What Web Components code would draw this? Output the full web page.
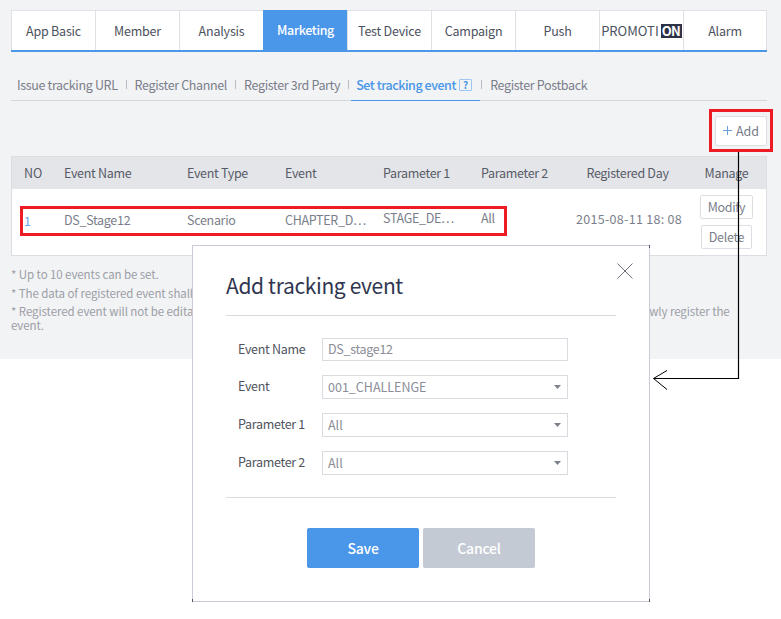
<!DOCTYPE html>
<html lang="en">
<head>
<meta charset="utf-8">
<title>Set tracking event</title>
<style>
    html, body { margin: 0; background: #fff; }
    body { width: 781px; height: 619px; position: relative; overflow: hidden;
           font: 12px/16px "Noto Sans CJK KR", "Noto Sans", sans-serif; color: #6f7480; }
</style>
</head>
<body>
<app-page>
    <tab-bar slot="top">
        <tab-item>App Basic</tab-item>
        <tab-item>Member</tab-item>
        <tab-item>Analysis</tab-item>
        <tab-item active>Marketing</tab-item>
        <tab-item>Test Device</tab-item>
        <tab-item>Campaign</tab-item>
        <tab-item>Push</tab-item>
        <tab-item style="font-size:13px;letter-spacing:0">PROMOTI<on-badge>ON</on-badge></tab-item>
        <tab-item>Alarm</tab-item>
    </tab-bar>
    <sub-nav slot="top"></sub-nav>
    <add-button slot="top"></add-button>
    <event-table slot="top"></event-table>
    <note-list slot="top"></note-list>
</app-page>
<add-modal></add-modal>
<call-outs></call-outs>

<script>
// 页面外框
class AppPage extends HTMLElement {
    constructor() {
        super();
        this.attachShadow({ mode: 'open' }).innerHTML = `
            <style>
                :host { display: block; }
                .panel {
                    background: #f2f3f5;
                    height: 349px;
                    padding: 10px 14px 0 11px;
                    display: flex;
                    flex-direction: column;
                }
            </style>
            <div class="panel"><slot name="top"></slot></div>
        `;
    }
}

class TabBar extends HTMLElement {
    constructor() {
        super();
        this.attachShadow({ mode: 'open' }).innerHTML = `
            <style>
                :host {
                    display: grid;
                    grid-template-columns: repeat(9, 84px);
                    height: 42px;
                    box-sizing: border-box;
                    background: #fff;
                    border-bottom: 2px solid #4a96e8;
                }
            </style>
            <slot></slot>
        `;
    }
}

class TabItem extends HTMLElement {
    constructor() {
        super();
        this.attachShadow({ mode: 'open' }).innerHTML = `
            <style>
                :host {
                    display: flex;
                    align-items: center;
                    justify-content: center;
                    box-sizing: border-box;
                    border: 1px solid #dfe1e6;
                    border-width: 1px 0 0 1px;
                    font-size: 12.5px;
                    letter-spacing: -0.2px;
                    color: #4c515e;
                    white-space: nowrap;
                }
                :host(:last-child) { border-right-width: 1px; }
                :host([active]) {
                    background: #4a96e8;
                    border-color: #4a96e8;
                    color: #fff;
                    font-weight: 500;
                    letter-spacing: -0.35px;
                    padding-bottom: 2px;
                }
            </style>
            <slot></slot>
        `;
    }
}

class OnBadge extends HTMLElement {
    constructor() {
        super();
        this.attachShadow({ mode: 'open' }).innerHTML = `
            <style>
                :host {
                    display: inline-block;
                    margin-left: 2px;
                    padding: 0 2px 0 1px;
                    background: #2c3347;
                    color: #fff;
                    font-weight: 700;
                    letter-spacing: -0.8px;
                    line-height: 14px;
                }
            </style>
            <slot></slot>
        `;
    }
}

class SubNav extends HTMLElement {
    constructor() {
        super();
        this.attachShadow({ mode: 'open' }).innerHTML = `
            <style>
                :host {
                    display: flex;
                    align-items: center;
                    height: 31px;
                    margin-top: 17px;
                    padding-left: 6px;
                    border-bottom: 1px solid #d3d6dc;
                    font-size: 12.5px;
                    letter-spacing: -0.35px;
                    color: #7a7e8a;
                    white-space: nowrap;
                }
                .sep { width: 1px; height: 9px; background: #b9bcc4; margin: 0 8px; }
                .on {
                    align-self: stretch;
                    display: flex;
                    align-items: center;
                    margin: 0 0 -1px 2px;
                    padding: 0 0 0 5px;
                    width: 129px;
                    box-sizing: border-box;
                    border-bottom: 1px solid #4a96e8;
                    color: #4a96e8;
                    font-weight: 500;
                    letter-spacing: -0.45px;
                }
                .help {
                    box-sizing: border-box;
                    width: 13px; height: 12px;
                    margin-left: 3px;
                    border: 1px solid #9ec6f2;
                    border-radius: 1px;
                    font-size: 10px;
                    line-height: 10px;
                    text-align: center;
                    font-weight: 700;
                    letter-spacing: 0;
                }
            </style>
            <span>Issue tracking URL</span><i class="sep"></i>
            <span>Register Channel</span><i class="sep"></i>
            <span>Register 3rd Party</span><i class="sep" style="margin-right:0"></i>
            <span class="on"><span>Set tracking event</span><span class="help">?</span></span><i class="sep" style="margin-left:1px"></i>
            <span>Register Postback</span>
        `;
    }
}

class AddButton extends HTMLElement {
    constructor() {
        super();
        this.attachShadow({ mode: 'open' }).innerHTML = `
            <style>
                :host {
                    display: flex;
                    align-items: center;
                    gap: 4px;
                    align-self: flex-end;
                    box-sizing: border-box;
                    width: 52px;
                    height: 30px;
                    margin-top: 15px;
                    padding: 0 0 1px 7px;
                    background: #fff;
                    border: 1px solid #dcdee3;
                    border-radius: 2px;
                    font-size: 12.5px;
                    color: #777b87;
                }
                svg { display: block; }
            </style>
            <svg width="9" height="9" viewBox="0 0 9 9"><path d="M4.5 0v9M0 4.5h9" stroke="#6a9fe0" fill="none"/></svg>
            <span>Add</span>
        `;
    }
}

class EventTable extends HTMLElement {
    constructor() {
        super();
        this.attachShadow({ mode: 'open' }).innerHTML = `
            <style>
                :host {
                    display: block;
                    box-sizing: border-box;
                    height: 100px;
                    margin-top: 10px;
                    background: #fff;
                    border: 1px solid #dcdee3;
                    font-size: 12.5px;
                    letter-spacing: -0.3px;
                    color: #7a7e8a;
                }
                .row {
                    display: grid;
                    grid-template-columns: 52px 123px 98px 98px 98px 90px 116px 1fr;
                    align-items: center;
                }
                .head { height: 32px; box-sizing: border-box; background: #e4e5e9; color: #575b67; }
                .body { height: 66px; padding-bottom: 4px; box-sizing: border-box; }
                .no { padding-left: 12px; letter-spacing: 0; }
                .num { padding-left: 12px; color: #6aa5ea; padding-top: 2px; }
                .c { text-align: center; }
                .rd { text-align: center; padding-right: 3px; }
                .up { padding-bottom: 4px; }
                .date { text-align: center; letter-spacing: 0.3px; padding-bottom: 2px; }
                .manage { display: flex; flex-direction: column; align-items: center; gap: 6px; align-self: start; margin-top: 6px; }
                .btn {
                    box-sizing: border-box;
                    height: 24px;
                    padding: 0 7px;
                    line-height: 22px;
                    border: 1px solid #dcdee3;
                    border-radius: 2px;
                    background: #fff;
                }
            </style>
            <div class="row head">
                <span class="no">NO</span><span>Event Name</span><span>Event Type</span><span>Event</span>
                <span>Parameter 1</span><span>Parameter 2</span><span class="rd">Registered Day</span><span class="c">Manage</span>
            </div>
            <div class="row body">
                <span class="num">1</span><span>DS_Stage12</span><span>Scenario</span><span>CHAPTER_D⋯</span>
                <span class="up">STAGE_DE⋯</span><span class="up">All</span><span class="date">2015-08-11 18: 08</span>
                <div class="manage"><span class="btn">Modify</span><span class="btn">Delete</span></div>
            </div>
        `;
    }
}

class NoteList extends HTMLElement {
    constructor() {
        super();
        this.attachShadow({ mode: 'open' }).innerHTML = `
            <style>
                :host {
                    display: block;
                    margin-top: 11px;
                    font-size: 11.5px;
                    line-height: 14px;
                    letter-spacing: -0.08px;
                    color: #9b9ea6;
                }
                p { margin: 0 0 4px; }
                p:nth-child(2) { margin-bottom: 5px; }
            </style>
            <p>* Up to 10 events can be set.</p>
            <p>* The data of registered event shall</p>
            <p>* Registered event will not be editable once it's been registered. To change the content, please delete the old event and newly register the<br>event.</p>
        `;
    }
}

class FormRow extends HTMLElement {
    constructor() {
        super();
        const caret = this.hasAttribute('select')
            ? '<svg width="7" height="4" viewBox="0 0 7 4"><path d="M0 0h7L3.500 4z" fill="#7d818c"/></svg>' : '';
        this.attachShadow({ mode: 'open' }).innerHTML = `
            <style>
                :host {
                    display: grid;
                    grid-template-columns: 84px 246px;
                    align-items: center;
                    height: 24px;
                    font-size: 12.5px;
                    color: #4f5460;
                }
                :host(:not([select])) { height: 23px; }
                :host(:not([select])) .field { padding-bottom: 1px; letter-spacing: -0.3px; }
                .label { letter-spacing: -0.3px; padding-bottom: 2px; }
                .field {
                    display: flex;
                    align-items: center;
                    justify-content: space-between;
                    box-sizing: border-box;
                    height: 100%;
                    padding: 0 6px 0 5px;
                    border: 1px solid #d9dbe0;
                    color: #8a8d97;
                }
            </style>
            <span class="label">${this.getAttribute('label')}</span>
            <div class="field"><span>${this.getAttribute('value')}</span>${caret}</div>
        `;
    }
}

class AddModal extends HTMLElement {
    constructor() {
        super();
        this.attachShadow({ mode: 'open' }).innerHTML = `
            <style>
                :host {
                    position: absolute;
                    left: 192px;
                    top: 245px;
                    width: 458px;
                    height: 357px;
                    box-sizing: border-box;
                    padding: 0 33px;
                    background: #fff;
                    border: 1px solid #c9cbd6;
                    display: flex;
                    flex-direction: column;
                }
                h2 {
                    margin: 0;
                    height: 70px;
                    box-sizing: border-box;
                    padding-top: 23px;
                    border-bottom: 1px solid #d8dade;
                    font-size: 21px;
                    line-height: 32px;
                    letter-spacing: -0.35px;
                    font-weight: 400;
                    color: #2f3650;
                }
                .close { position: absolute; right: 16px; top: 17px; display: block; }
                .dot { position: absolute; width: 1px; height: 3px; background: #55586a; }
                .form {
                    display: flex;
                    flex-direction: column;
                    gap: 14px;
                    padding: 22px 0 22px 12px;
                    border-bottom: 1px solid #d8dade;
                }
                .actions { display: flex; justify-content: center; gap: 4px; margin-top: 30px; }
                .actions span {
                    width: 112px;
                    height: 40px;
                    line-height: 40px;
                    text-align: center;
                    border-radius: 2px;
                    color: #fff;
                    font-size: 14px;
                    letter-spacing: -0.2px;
                    font-weight: 500;
                }
                .save { background: #4a96e8; }
                .cancel { background: #c3cad4; }
            </style>
            <h2>Add tracking event</h2>
            <svg class="close" width="16" height="16" viewBox="0 0 16 16"><path d="M.5.5l15 15M15.500.5l-15 15" stroke="#6d717c" fill="none"/></svg>
            <div class="form">
                <form-row label="Event Name" value="DS_stage12"></form-row>
                <form-row select label="Event" value="001_CHALLENGE"></form-row>
                <form-row select label="Parameter 1" value="All"></form-row>
                <form-row select label="Parameter 2" value="All"></form-row>
            </div>
            <div class="actions"><span class="save">Save</span><span class="cancel">Cancel</span></div>
            <i class="dot" style="right:-1px;top:-1px"></i>
            <i class="dot" style="left:-1px;bottom:-1px"></i>
            <i class="dot" style="right:-1px;bottom:-1px"></i>
        `;
    }
}

// 红框和箭头标注，盖在页面上面
class CallOuts extends HTMLElement {
    constructor() {
        super();
        this.attachShadow({ mode: 'open' }).innerHTML = `
            <style>
                :host { position: absolute; left: 0; top: 0; width: 781px; height: 619px; pointer-events: none; }
                svg { display: block; }
            </style>
            <svg width="781" height="619" viewBox="0 0 781 619" fill="none">
                <rect x="710.500" y="110.500" width="61" height="40" stroke="#ed1c24" stroke-width="3"/>
                <rect x="21.500" y="207.500" width="484" height="27" stroke="#ed1c24" stroke-width="3"/>
                <path d="M738.500 152V378.500H654" stroke="#000" stroke-width="1.200"/>
                <path d="M667 370.500L653.500 378.500L667 389.500" stroke="#000" stroke-width="1"/>
            </svg>
        `;
    }
}

// 注册组件
customElements.define('app-page', AppPage);
customElements.define('tab-bar', TabBar);
customElements.define('tab-item', TabItem);
customElements.define('on-badge', OnBadge);
customElements.define('sub-nav', SubNav);
customElements.define('add-button', AddButton);
customElements.define('event-table', EventTable);
customElements.define('note-list', NoteList);
customElements.define('form-row', FormRow);
customElements.define('add-modal', AddModal);
customElements.define('call-outs', CallOuts);
</script>
</body>
</html>
